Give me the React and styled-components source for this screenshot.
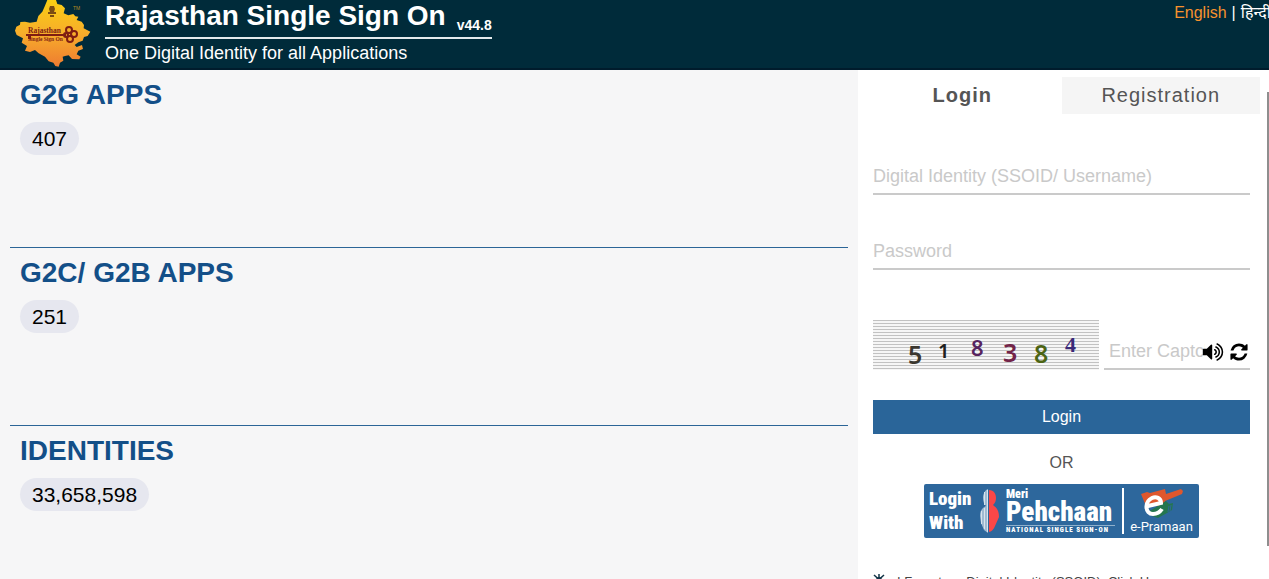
import React from "react";
import styled, { createGlobalStyle } from "styled-components";

const GlobalStyle = createGlobalStyle`
  *, *::before, *::after { box-sizing: border-box; }
  body {
    margin: 0;
    overflow: hidden;
    background: #f6f6f7;
    color: #000;
    font-family: "Liberation Sans", "Noto Sans", Arial, sans-serif;
  }
  button, input { font: inherit; }
  h1, h2, p { margin: 0; }
`;

const Page = styled.div`
  display: flex;
  flex-direction: column;
  height: 100vh;
  overflow: hidden;
`;

const Header = styled.header`
  display: flex;
  flex: none;
  height: 70px;
  padding-left: 14px;
  background: #002b3a;
  border-bottom: 2px solid #001c2c;
  color: #fff;
  overflow: hidden;
`;

const Logo = styled.svg`
  flex: none;
  width: 78px;
  height: 68px;
  margin-right: 13px;
`;

const Brand = styled.div`
  flex: none;
`;

const Title = styled.h1`
  display: flex;
  align-items: baseline;
  gap: 11px;
  height: 39px;
  border-bottom: 2px solid #e4eaec;
  font-size: 28px;
  line-height: 32px;
`;

const Version = styled.span`
  align-self: flex-start;
  padding-top: 17px;
  font-size: 14px;
  line-height: 16px;
`;

const Tagline = styled.p`
  margin-top: 3px;
  font-size: 18px;
  line-height: 22px;
`;

const Languages = styled.nav`
  display: flex;
  flex: none;
  gap: 5px;
  margin-left: auto;
  margin-right: -2px;
  padding-top: 3px;
  font-size: 16px;
  line-height: 20px;
  white-space: nowrap;
`;

const Language = styled.a`
  color: ${(p) => (p.$active ? "#f7922d" : "#fff")};
  text-decoration: none;
`;

const Main = styled.main`
  display: grid;
  flex: 1;
  grid-template-columns: minmax(0, 1fr) 411px;
  min-height: 0;
`;

const Stats = styled.div`
  min-width: 0;
  padding: 0 10px;
  background: #f6f6f7;
  overflow: hidden;
`;

const Stat = styled.section`
  height: 178px;
  padding: 8px 10px 0;
  border-bottom: 1px solid #2b6597;
`;

const StatTitle = styled.h2`
  color: #134f88;
  font-size: 28px;
  line-height: 34px;
`;

const Count = styled.span`
  display: inline-block;
  margin-top: 10px;
  padding: 0 12px;
  border-radius: 17px;
  background: #e6e7ef;
  font-size: 21px;
  line-height: 33px;
`;

const Panel = styled.aside`
  position: relative;
  min-width: 0;
  padding: 7px 9px 0 5px;
  background: #fff;
  overflow: hidden;
`;

const ScrollThumb = styled.span`
  position: absolute;
  top: 22px;
  right: 0;
  width: 2px;
  height: 454px;
  background: #8e8e8e;
`;

const Tabs = styled.div`
  display: grid;
  grid-template-columns: 1fr 1fr;
`;

const Tab = styled.button`
  height: 37px;
  padding: 0;
  border: 0;
  background: ${(p) => (p.$active ? "#fff" : "#f5f5f5")};
  color: #555;
  font-size: 20px;
  font-weight: ${(p) => (p.$active ? 700 : 400)};
  letter-spacing: 1px;
`;

const Form = styled.form`
  display: flex;
  flex-direction: column;
  padding: 41px 10px 0;
`;

const TextInput = styled.input`
  display: block;
  width: 100%;
  height: 40px;
  padding: ${(p) => (p.$captcha ? "4px 45px 0 5px" : "4px 0 0")};
  border: 0;
  border-bottom: 2px solid #cacaca;
  border-radius: 0;
  outline: 0;
  background: transparent;
  font-size: 18px;
  &::placeholder { color: #c9c9c9; opacity: 1; }
`;

const Field = styled.div`
  margin-bottom: 35px;
`;

const CaptchaRow = styled.div`
  display: flex;
  align-items: flex-end;
  gap: 5px;
  margin: 15px 0 30px;
`;

const CaptchaImage = styled.svg`
  flex: none;
  width: 226px;
  height: 50px;
  font-family: "Noto Sans", "Open Sans", sans-serif;
  font-weight: 600;
`;

const CaptchaField = styled.div`
  position: relative;
  flex: 1;
  min-width: 0;
`;

const CaptchaTools = styled.div`
  position: absolute;
  top: 11px;
  right: 1px;
  display: flex;
  gap: 5px;
`;

const IconButton = styled.button`
  display: flex;
  padding: 0;
  border: 0;
  background: none;
  color: #000;
`;

const SubmitButton = styled.button`
  height: 34px;
  border: 0;
  background: #2a6599;
  color: #fff;
  font-size: 16px;
`;

const Divider = styled.p`
  margin: 19px 0 11px;
  color: #555;
  font-size: 16px;
  line-height: 20px;
  text-align: center;
`;

const PartnerButton = styled.button`
  display: flex;
  align-items: center;
  align-self: center;
  width: 275px;
  height: 54px;
  padding: 4px 5px;
  border: 0;
  border-radius: 2px;
  background: #2d679c;
  color: #fff;
  text-align: left;
`;

const LoginWith = styled.span`
  flex: none;
  width: 47px;
  font-family: "Roboto Condensed", Roboto, sans-serif;
  font-size: 19px;
  font-weight: 900;
  line-height: 24px;
`;

const Person = styled.svg`
  flex: none;
  width: 20px;
  height: 46px;
  margin: 0 7px 0 3px;
`;

const Pehchaan = styled.span`
  display: flex;
  flex: none;
  flex-direction: column;
  width: 109px;
  font-family: "Roboto Condensed", Roboto, sans-serif;
  font-weight: 900;
`;

const Meri = styled.span`
  font-size: 12px;
  line-height: 12px;
`;

const PehchaanName = styled.span`
  border-bottom: 1px solid #8fb0cc;
  font-size: 27px;
  line-height: 25px;
`;

const Motto = styled.span`
  font-size: 7px;
  letter-spacing: 1px;
  line-height: 9px;
  white-space: nowrap;
`;

const Pramaan = styled.span`
  display: flex;
  flex: 1;
  flex-direction: column;
  align-items: center;
  margin-left: 7px;
  padding-left: 5px;
  border-left: 2px solid #fff;
  font-family: Roboto, sans-serif;
  font-size: 13px;
  line-height: 14px;
`;

const Help = styled.a`
  display: flex;
  align-items: flex-start;
  gap: 12px;
  margin-top: 36px;
  color: #444;
  font-size: 13px;
  line-height: 16px;
  text-decoration: none;
  white-space: nowrap;
`;

const stats = [
  { title: "G2G APPS", count: "407" },
  { title: "G2C/ G2B APPS", count: "251" },
  { title: "IDENTITIES", count: "33,658,598" },
];

const captchaDigits = [
  { digit: "5", x: 35, y: 44, size: 25, fill: "#3a372f" },
  { digit: "1", x: 65, y: 38, size: 20, fill: "#202020" },
  { digit: "8", x: 98, y: 36, size: 22, fill: "#57245f" },
  { digit: "3", x: 130, y: 42, size: 25, fill: "#722448" },
  { digit: "8", x: 161, y: 43, size: 25, fill: "#4c6414" },
  { digit: "4", x: 192, y: 32, size: 22, fill: "#3a2a78", family: "Liberation Serif, serif" },
];

function RajasthanLogo() {
  return (
    <Logo viewBox="0 0 78 68" role="img" aria-label="Rajasthan Single Sign On">
      <defs>
        <linearGradient id="land" x1="0" y1="0" x2="0" y2="1">
          <stop offset="0" stopColor="#f9cf12" />
          <stop offset="0.5" stopColor="#f7ad2b" />
          <stop offset="1" stopColor="#ee7b31" />
        </linearGradient>
      </defs>
      <path
        fill="url(#land)"
        transform="translate(-4 0) scale(0.3333)"
        d="M112 0H138L142 12 155 15 165 25 161 40 175 46 190 42 196 49 205 50 200 60 215 65 222 75 221 85 241 95 233 108 222 111 218 122 205 127 194 135 200 141 216 135 219 147 205 152 200 163 212 170 208 178 186 177 176 166 165 168 158 170 160 182 150 188 146 200 136 198 130 188 116 184 105 170 86 160 75 150 60 156 45 152 51 138 35 128 39 115 20 105 15 92 19 80 30 74 31 66 45 65 60 68 80 65 85 48 97 35 103 22Z"
      />
      <g fill="#7a4c12">
        <path d="M36 6h4l1 3-1 3h-4l-1-3zM34 12h8v2h-8zM36 15h4v2h-4z" />
      </g>
      <g fill="#7f1d12">
        <path d="M12 34h40v2H12zM14 36h3v3h-3z" />
        <g fill="none" stroke="#7f1d12" strokeWidth="2">
          <circle cx="55" cy="30" r="3" />
          <circle cx="56" cy="39" r="3" />
          <circle cx="52" cy="35" r="2" />
          <circle cx="60" cy="34" r="3" />
        </g>
        <text x="14" y="33" fontFamily="Liberation Serif, serif" fontSize="7.5" fontWeight="700">Rajasthan</text>
        <text x="14" y="41" fontFamily="Liberation Serif, serif" fontSize="5.5" fontWeight="700">Single Sign On</text>
      </g>
      <text x="59" y="10" fill="#b98a20" fontFamily="Liberation Sans, sans-serif" fontSize="5">TM</text>
    </Logo>
  );
}

function Captcha() {
  return (
    <CaptchaImage viewBox="0 0 226 50" role="img" aria-label="Captcha">
      <defs>
        <pattern id="lines" width="226" height="3" patternUnits="userSpaceOnUse">
          <rect width="226" height="3" fill="#f6f6f6" />
          <rect width="226" height="1" fill="#c2c2c2" />
        </pattern>
      </defs>
      <rect width="226" height="50" fill="url(#lines)" />
      {captchaDigits.map((d, i) => (
        <text key={i} x={d.x} y={d.y} fontSize={d.size} fontFamily={d.family} fill={d.fill}>{d.digit}</text>
      ))}
    </CaptchaImage>
  );
}

function VolumeIcon() {
  return (
    <svg width="22" height="22" viewBox="0 0 1792 1792" fill="currentColor">
      <path d="M832 352v1088q0 26-19 45t-45 19-45-19l-333-333h-262q-26 0-45-19t-19-45v-384q0-26 19-45t45-19h262l333-333q19-19 45-19t45 19 19 45zm384 544q0 76-42.5 141.5t-112.5 93.5q-10 5-25 5-26 0-45-18.5t-19-45.5q0-21 12-35.5t29-25 34-23 29-36 12-56.5-12-56.5-29-36-34-23-29-25-12-35.5q0-27 19-45.5t45-18.5q15 0 25 5 70 27 112.5 93t42.5 142zm256 0q0 153-85 282.5t-225 188.5q-13 5-25 5-27 0-46-19t-19-45q0-39 39-59 56-29 76-44 74-54 115.5-135.5t41.5-173.5-41.5-173.5-115.5-135.5q-20-15-76-44-39-20-39-59 0-26 19-45t45-19q13 0 26 5 140 59 225 188.5t85 282.5zm256 0q0 230-127 422.5t-338 283.5q-13 5-26 5-26 0-45-19t-19-45q0-36 39-59 7-4 22.5-10.5t22.5-10.5q46-25 82-51 123-91 192-227t69-289-69-289-192-227q-36-26-82-51-7-4-22.5-10.5t-22.5-10.5q-39-23-39-59 0-26 19-45t45-19q13 0 26 5 211 91 338 283.5t127 422.5z" />
    </svg>
  );
}

function RefreshIcon() {
  return (
    <svg width="20" height="22" viewBox="0 0 1792 1792" fill="currentColor">
      <path d="M1639 1056q0 5-1 7-64 268-268 434.5t-478 166.5q-146 0-282.5-55t-243.5-157l-129 129q-19 19-45 19t-45-19-19-45v-448q0-26 19-45t45-19h448q26 0 45 19t19 45-19 45l-137 137q71 66 161 102t187 36q134 0 250-65t186-179q11-17 53-117 8-23 30-23h192q13 0 22.5 9.5t9.5 22.5zm25-800v448q0 26-19 45t-45 19h-448q-26 0-45-19t-19-45 19-45l138-138q-148-137-349-137-134 0-250 65t-186 179q-11 17-53 117-8 23-30 23h-199q-13 0-22.5-9.5t-9.5-22.5v-7q65-268 270-434.5t480-166.5q146 0 284 55.5t245 156.5l130-129q19-19 45-19t45 19 19 45z" />
    </svg>
  );
}

function PersonIcon() {
  return (
    <Person viewBox="0 0 20 46" aria-hidden="true">
      <path
        fill="#9fbad2"
        d="M9 1v44l-4-3-3-7-1-7c0-5 2-8 6-10-2-2-3-5-3-8 0-4 2-8 5-9z"
      />
      <path stroke="#d7e3ed" d="M8.5 2v42M5.500 4v13M5.500 20v21M2.500 23v13" />
      <path fill="#fa4747" d="M10 2c5 0 7 4 7 8 0 3-1 5-3 7 4 3 6 6 6 12l-4 9c-1 3-4 6-6 6z" />
    </Person>
  );
}

function PramaanIcon() {
  return (
    <svg width="46" height="32" viewBox="0 0 44 32" aria-hidden="true">
      <path fill="#df572d" d="M1 6l6-2 3 1 15-4 1 5 15-5 2 2-1 3-17 7-2 5H6z" />
      <path fill="#24764e" d="M8 24l18-11 3 3 4-1-1 7-5 3-9 5-6-2z" />
      <path fill="none" stroke="#2d679c" strokeWidth="1" d="M29 18l-1 6m3-7l-1 6" />
      <path fill="none" stroke="#fff" strokeWidth="4" d="M8 18l13-3c0-5-5-7-9-5C4 14 5 26 13 26c4 0 7-2 9-5" />
    </svg>
  );
}

function HelpIcon() {
  return (
    <svg width="12" height="14" viewBox="0 0 12 14" aria-hidden="true">
      <path stroke="#123447" strokeWidth="1.500" d="M6 0v12M1 1l10 9M11 1L1 10" />
      <circle cx="6" cy="6" r="3" fill="#123447" />
    </svg>
  );
}

export default function App() {
  return (
    <Page>
      <GlobalStyle />
      <Header>
        <RajasthanLogo />
        <Brand>
          <Title>
            Rajasthan Single Sign On
            <Version>v44.8</Version>
          </Title>
          <Tagline>One Digital Identity for all Applications</Tagline>
        </Brand>
        <Languages aria-label="Language">
          <Language href="#english" $active>English</Language>
          <span>|</span>
          <Language href="#hindi" lang="hi">हिन्दी</Language>
        </Languages>
      </Header>
      <Main>
        <Stats>
          {stats.map((s) => (
            <Stat key={s.title}>
              <StatTitle>{s.title}</StatTitle>
              <Count>{s.count}</Count>
            </Stat>
          ))}
        </Stats>
        <Panel>
          <Tabs role="tablist">
            <Tab type="button" role="tab" aria-selected="true" $active>Login</Tab>
            <Tab type="button" role="tab" aria-selected="false">Registration</Tab>
          </Tabs>
          <Form>
            <Field>
              <TextInput type="text" aria-label="Digital Identity" placeholder="Digital Identity (SSOID/ Username)" />
            </Field>
            <Field>
              <TextInput type="password" aria-label="Password" placeholder="Password" />
            </Field>
            <CaptchaRow>
              <Captcha />
              <CaptchaField>
                <TextInput type="text" aria-label="Captcha" placeholder="Enter Captcha" $captcha />
                <CaptchaTools>
                  <IconButton type="button" aria-label="Listen to captcha"><VolumeIcon /></IconButton>
                  <IconButton type="button" aria-label="Refresh captcha"><RefreshIcon /></IconButton>
                </CaptchaTools>
              </CaptchaField>
            </CaptchaRow>
            <SubmitButton type="submit">Login</SubmitButton>
            <Divider>OR</Divider>
            <PartnerButton type="button">
              <LoginWith>Login With</LoginWith>
              <PersonIcon />
              <Pehchaan>
                <Meri>Meri</Meri>
                <PehchaanName>Pehchaan</PehchaanName>
                <Motto>NATIONAL SINGLE SIGN-ON</Motto>
              </Pehchaan>
              <Pramaan>
                <PramaanIcon />
                e-Pramaan
              </Pramaan>
            </PartnerButton>
            <Help href="#forgot">
              <HelpIcon />
              I Forgot my Digital Identity (SSOID). Click Here
            </Help>
          </Form>
          <ScrollThumb />
        </Panel>
      </Main>
    </Page>
  );
}
